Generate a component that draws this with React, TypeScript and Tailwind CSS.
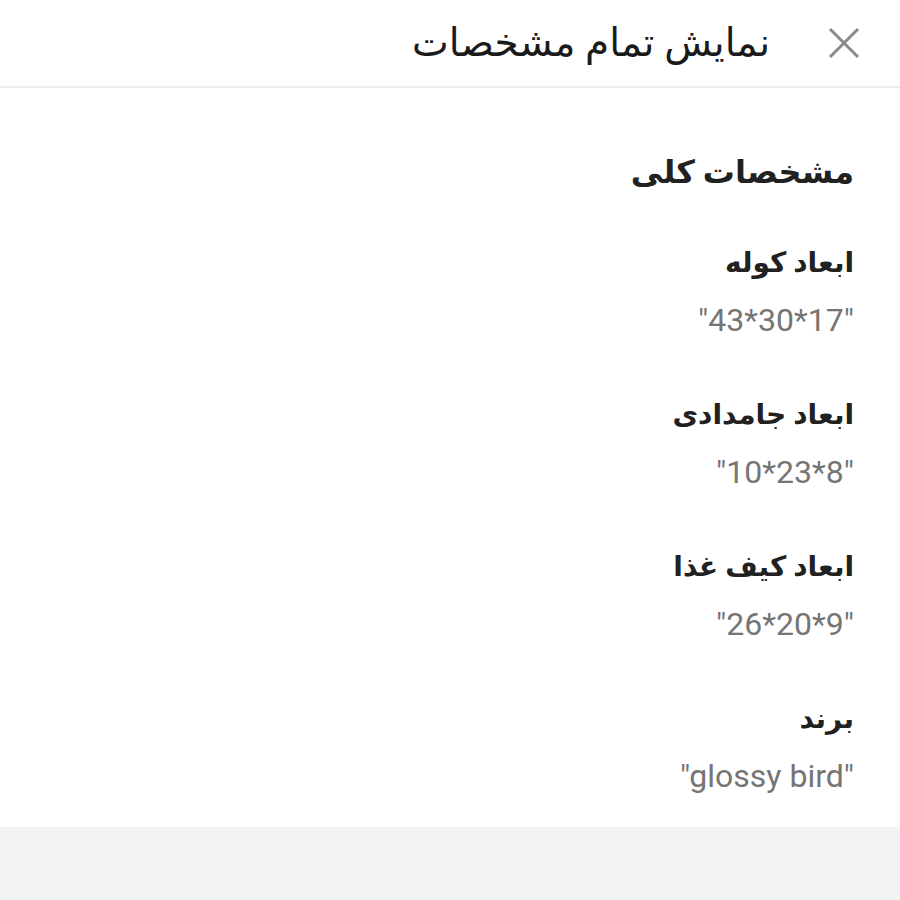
const specs = [
  { label: 'ابعاد کوله', value: '"43*30*17"' },
  { label: 'ابعاد جامدادی', value: '"10*23*8"' },
  { label: 'ابعاد کیف غذا', value: '"26*20*9"' },
  { label: 'برند', value: '"glossy bird"' },
];

const SpecSheet: React.FC = () => {
  return (
    <div
      dir="rtl"
      className="min-h-[900px] bg-[#f2f3f5] text-[#212121]"
      style={{ fontFamily: 'Roboto, "DejaVu Sans", sans-serif' }}
    >
      <header className="h-[88px] flex items-center bg-white border-b-2 border-[#ececec] pr-[40px]">
        <button className="w-[32px] h-[32px] shrink-0">
          <svg viewBox="0 0 32 32" width="32" height="32" stroke="#8a8a8a" strokeWidth="3" fill="none">
            <line x1="2" y1="2" x2="30" y2="30" />
            <line x1="30" y1="2" x2="2" y2="30" />
          </svg>
        </button>
        <h1 className="mr-[58px] text-[39px] leading-[44px] text-[#1a1a1a]">نمایش تمام مشخصات</h1>
      </header>

      <section className="bg-white pr-[46px] pt-[64px] pb-[31px]">
        <h2 className="text-[32px] font-bold leading-[40px] mb-[51px]">مشخصات کلی</h2>
        <div className="flex flex-col gap-[55px]">
          {specs.map((spec) => (
            <div key={spec.label}>
              <h3 className="text-[28px] font-bold leading-[40px]">{spec.label}</h3>
              <p dir="ltr" className="text-right text-[32px] leading-[40px] text-[#757575] mt-[17px]">
                {spec.value}
              </p>
            </div>
          ))}
        </div>
      </section>
    </div>
  );
};

export default function App() {
  return <SpecSheet />;
}
